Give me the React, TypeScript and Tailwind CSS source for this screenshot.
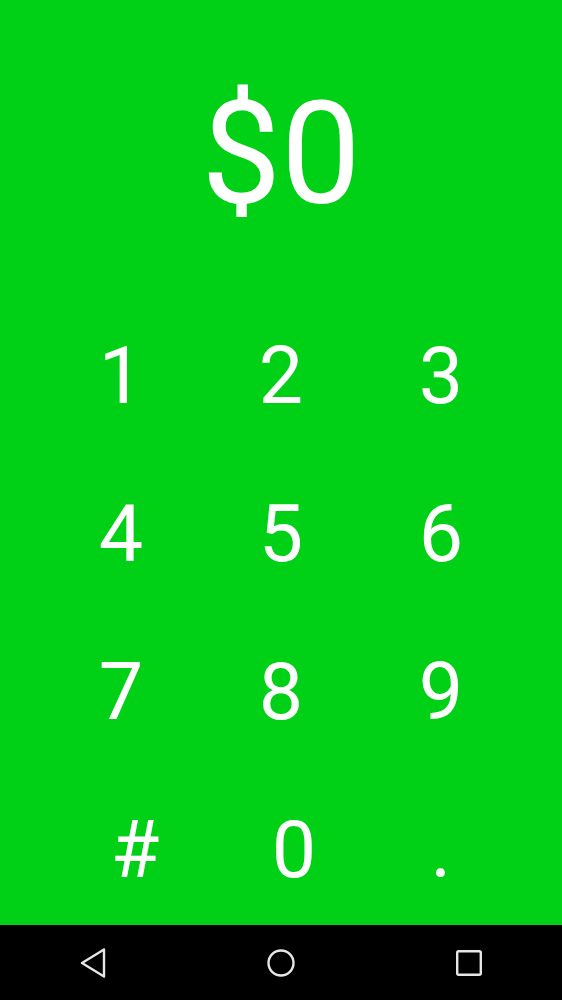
import React from "react";

const rows = [
  ["1", "2", "3"],
  ["4", "5", "6"],
  ["7", "8", "9"],
];

export default function App() {
  return (
    <div
      className="w-[562px] h-[1000px] flex flex-col overflow-hidden"
      style={{ fontFamily: "Roboto, 'Liberation Sans', sans-serif" }}
    >
      <div className="flex-1 min-h-0 overflow-hidden bg-[#00d016] text-white flex flex-col items-center">
        <div className="mt-[84px] h-[142px] shrink-0 text-[142px] leading-none">$0</div>
        <div className="mt-[71px] w-[480px] flex flex-col shrink-0">
          {rows.map((r, i) => (
            <div key={i} className="grid grid-cols-3 h-[158px]">
              {r.map((d) => (
                <div key={d} className="text-center text-[79px] leading-[158px]">
                  {d}
                </div>
              ))}
            </div>
          ))}
          <div className="grid grid-cols-3 h-[158px]">
            <div className="text-center text-[79px] leading-[158px] pl-[28px]">#</div>
            <div className="text-center text-[79px] leading-[158px] pl-[26px]">0</div>
            <div className="text-center text-[79px] leading-[158px]">.</div>
          </div>
        </div>
      </div>
      <div className="h-[75px] shrink-0 bg-black flex items-center justify-between px-[79px]">
        <svg width="28" height="32" viewBox="0 0 28 32" fill="none">
          <path
            d="M25 2.5 L3 16 L25 29.5 Z"
            stroke="#e6e6e6"
            strokeWidth="2.4"
            strokeLinejoin="round"
          />
        </svg>
        <svg width="30" height="30" viewBox="0 0 30 30" fill="none">
          <circle cx="15" cy="15" r="12.5" stroke="#e6e6e6" strokeWidth="2.4" />
        </svg>
        <svg width="28" height="28" viewBox="0 0 28 28" fill="none">
          <rect x="2.2" y="2.2" width="23.6" height="23.6" rx="1.5" stroke="#e6e6e6" strokeWidth="2.4" />
        </svg>
      </div>
    </div>
  );
}
